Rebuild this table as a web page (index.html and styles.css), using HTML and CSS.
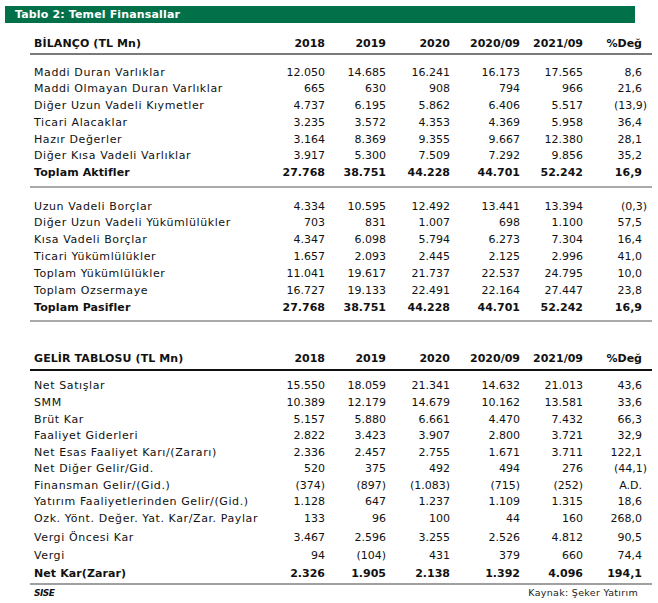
FILE: index.html
```html
<!DOCTYPE html>
<html lang="tr">
<head>
<meta charset="utf-8">
<title>Tablo 2: Temel Finansallar</title>
<link rel="stylesheet" href="styles.css">
</head>
<body>
<div class="page">
  <div class="title-bar">Tablo 2: Temel Finansallar</div>

  <section class="fin bilanco">
    <div class="row head">
      <span class="lbl">BİLANÇO (TL Mn)</span><span>2018</span><span>2019</span><span>2020</span><span>2020/09</span><span>2021/09</span><span>%Değ</span>
    </div>
    <div class="group g1">
      <div class="row"><span class="lbl">Maddi Duran Varlıklar</span><span>12.050</span><span>14.685</span><span>16.241</span><span>16.173</span><span>17.565</span><span>8,6</span></div>
      <div class="row"><span class="lbl">Maddi Olmayan Duran Varlıklar</span><span>665</span><span>630</span><span>908</span><span>794</span><span>966</span><span>21,6</span></div>
      <div class="row"><span class="lbl">Diğer Uzun Vadeli Kıymetler</span><span>4.737</span><span>6.195</span><span>5.862</span><span>6.406</span><span>5.517</span><span><i class="neg">(13,9)</i></span></div>
      <div class="row"><span class="lbl">Ticari Alacaklar</span><span>3.235</span><span>3.572</span><span>4.353</span><span>4.369</span><span>5.958</span><span>36,4</span></div>
      <div class="row"><span class="lbl">Hazır Değerler</span><span>3.164</span><span>8.369</span><span>9.355</span><span>9.667</span><span>12.380</span><span>28,1</span></div>
      <div class="row"><span class="lbl">Diğer Kısa Vadeli Varlıklar</span><span>3.917</span><span>5.300</span><span>7.509</span><span>7.292</span><span>9.856</span><span>35,2</span></div>
      <div class="row total"><span class="lbl">Toplam Aktifler</span><span>27.768</span><span>38.751</span><span>44.228</span><span>44.701</span><span>52.242</span><span>16,9</span></div>
    </div>
    <div class="group g2">
      <div class="row"><span class="lbl">Uzun Vadeli Borçlar</span><span>4.334</span><span>10.595</span><span>12.492</span><span>13.441</span><span>13.394</span><span><i class="neg">(0,3)</i></span></div>
      <div class="row"><span class="lbl">Diğer Uzun Vadeli Yükümlülükler</span><span>703</span><span>831</span><span>1.007</span><span>698</span><span>1.100</span><span>57,5</span></div>
      <div class="row"><span class="lbl">Kısa Vadeli Borçlar</span><span>4.347</span><span>6.098</span><span>5.794</span><span>6.273</span><span>7.304</span><span>16,4</span></div>
      <div class="row"><span class="lbl">Ticari Yükümlülükler</span><span>1.657</span><span>2.093</span><span>2.445</span><span>2.125</span><span>2.996</span><span>41,0</span></div>
      <div class="row"><span class="lbl">Toplam Yükümlülükler</span><span>11.041</span><span>19.617</span><span>21.737</span><span>22.537</span><span>24.795</span><span>10,0</span></div>
      <div class="row"><span class="lbl">Toplam Ozsermaye</span><span>16.727</span><span>19.133</span><span>22.491</span><span>22.164</span><span>27.447</span><span>23,8</span></div>
      <div class="row total"><span class="lbl">Toplam Pasifler</span><span>27.768</span><span>38.751</span><span>44.228</span><span>44.701</span><span>52.242</span><span>16,9</span></div>
    </div>
  </section>

  <section class="fin gelir">
    <div class="row head">
      <span class="lbl">GELİR TABLOSU (TL Mn)</span><span>2018</span><span>2019</span><span>2020</span><span>2020/09</span><span>2021/09</span><span>%Değ</span>
    </div>
    <div class="group g3">
      <div class="row"><span class="lbl">Net Satışlar</span><span>15.550</span><span>18.059</span><span>21.341</span><span>14.632</span><span>21.013</span><span>43,6</span></div>
      <div class="row"><span class="lbl">SMM</span><span>10.389</span><span>12.179</span><span>14.679</span><span>10.162</span><span>13.581</span><span>33,6</span></div>
      <div class="row"><span class="lbl">Brüt Kar</span><span>5.157</span><span>5.880</span><span>6.661</span><span>4.470</span><span>7.432</span><span>66,3</span></div>
      <div class="row"><span class="lbl">Faaliyet Giderleri</span><span>2.822</span><span>3.423</span><span>3.907</span><span>2.800</span><span>3.721</span><span>32,9</span></div>
      <div class="row"><span class="lbl">Net Esas Faaliyet Karı/(Zararı)</span><span>2.336</span><span>2.457</span><span>2.755</span><span>1.671</span><span>3.711</span><span>122,1</span></div>
      <div class="row"><span class="lbl">Net Diğer Gelir/Gid.</span><span>520</span><span>375</span><span>492</span><span>494</span><span>276</span><span><i class="neg">(44,1)</i></span></div>
      <div class="row"><span class="lbl">Finansman Gelir/(Gid.)</span><span>(374)</span><span>(897)</span><span>(1.083)</span><span>(715)</span><span>(252)</span><span>A.D.</span></div>
      <div class="row"><span class="lbl">Yatırım Faaliyetlerinden Gelir/(Gid.)</span><span>1.128</span><span>647</span><span>1.237</span><span>1.109</span><span>1.315</span><span>18,6</span></div>
      <div class="row"><span class="lbl">Ozk. Yönt. Değer. Yat. Kar/Zar. Paylar</span><span>133</span><span>96</span><span>100</span><span>44</span><span>160</span><span>268,0</span></div>
      <div class="row tall first-tall"><span class="lbl">Vergi Öncesi Kar</span><span>3.467</span><span>2.596</span><span>3.255</span><span>2.526</span><span>4.812</span><span>90,5</span></div>
      <div class="row tall"><span class="lbl">Vergi</span><span>94</span><span>(104)</span><span>431</span><span>379</span><span>660</span><span>74,4</span></div>
      <div class="row tall total"><span class="lbl">Net Kar(Zarar)</span><span>2.326</span><span>1.905</span><span>2.138</span><span>1.392</span><span>4.096</span><span>194,1</span></div>
    </div>
    <div class="foot">
      <span class="ticker">SISE</span>
      <span class="source">Kaynak: Şeker Yatırım</span>
    </div>
  </section>
</div>
</body>
</html>
```

FILE: styles.css
```css
* { box-sizing: border-box; }

html, body {
  margin: 0;
  padding: 0;
  background: #ffffff;
}

body {
  font-family: "DejaVu Sans", "Liberation Sans", sans-serif;
  font-size: 11px;
  color: #111111;
}

.page {
  width: 658px;
  padding-top: 6px;
}

.title-bar {
  margin-left: 5px;
  width: 630px;
  height: 17px;
  line-height: 17px;
  background: #02714a;
  color: #ffffff;
  font-weight: bold;
  font-size: 11px;
  letter-spacing: 0.15px;
  padding-left: 10px;
}

.fin {
  margin-left: 30px;
  width: 622px;
}

.row {
  display: grid;
  grid-template-columns: 231px 60px 61px 64px 70px 63px 59px;
  padding: 0 10px 0 4px;
  height: 16.8px;
  line-height: 16.8px;
  white-space: nowrap;
}

.row > span {
  text-align: right;
}

.row > span.lbl {
  text-align: left;
  letter-spacing: 0.6px;
}

.neg {
  font-style: normal;
  margin-right: -5px;
}

.head {
  font-weight: bold;
  height: 17px;
  line-height: 16px;
}

.head > span.lbl,
.total > span.lbl {
  letter-spacing: 0.1px;
}

.bilanco .head {
  margin-top: 13px;
  border-bottom: 2px solid #7a7a7a;
  height: 19px;
}

.g1 {
  padding-top: 9.5px;
  padding-bottom: 4px;
  border-bottom: 2px solid #a9a9a9;
}

.g2 {
  padding-top: 10.5px;
  padding-bottom: 3.5px;
  border-bottom: 2px solid #a9a9a9;
}

.g2 .row {
  height: 16.9px;
  line-height: 16.9px;
}

.total {
  font-weight: bold;
}

.gelir .head {
  margin-top: 29px;
  height: 20px;
  border-bottom: 2px solid #111111;
}

.g3 {
  padding-top: 7px;
  border-bottom: 2px solid #a0a0a0;
}

.g3 .row {
  height: 16.6px;
  line-height: 16.6px;
}

.g3 .tall {
  height: 18px;
  line-height: 18px;
}

.g3 .first-tall {
  height: 19.6px;
  padding-top: 1.6px;
}

.foot {
  display: flex;
  justify-content: space-between;
  align-items: center;
  padding: 1px 14px 0 4px;
  height: 14px;
}

.ticker {
  font-weight: bold;
  font-style: italic;
  font-size: 9px;
  letter-spacing: -0.5px;
}

.source {
  font-size: 9.5px;
  letter-spacing: 0.3px;
  color: #222222;
}
```
